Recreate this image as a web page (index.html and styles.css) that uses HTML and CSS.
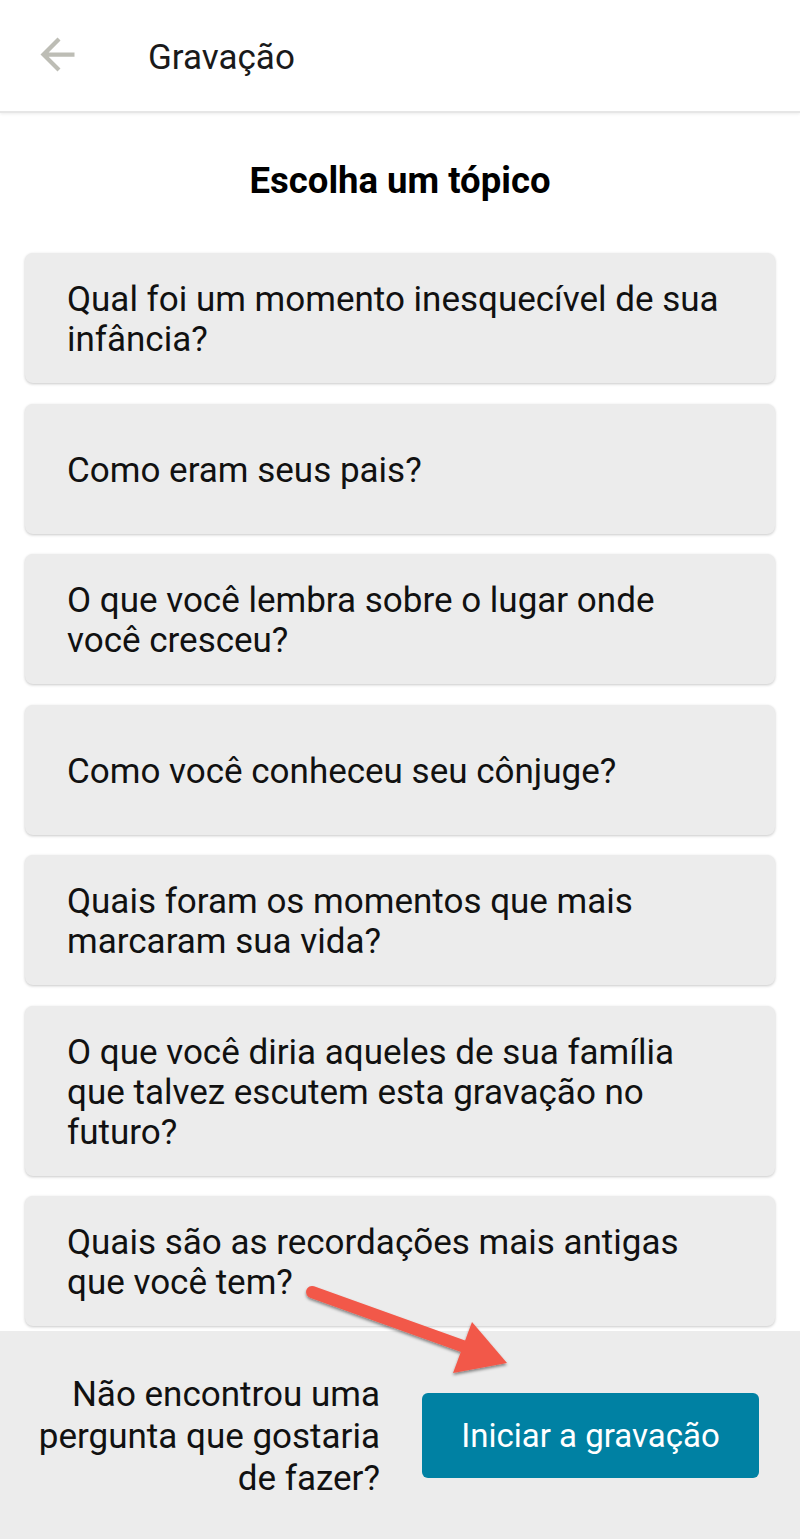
FILE: index.html
```html
<!DOCTYPE html>
<html lang="pt">
<head>
<meta charset="utf-8">
<title>Gravação</title>
<link rel="stylesheet" href="styles.css">
</head>
<body>
<div class="app">
  <header class="topbar">
    <svg class="back" viewBox="0 0 24 24" width="51" height="51"><path d="M20 11H7.83l5.59-5.59L12 4l-8 8 8 8 1.41-1.41L7.83 13H20v-2z"/></svg>
    <span class="topbar-title">Gravação</span>
  </header>
  <main class="content">
    <h1 class="heading">Escolha um tópico</h1>
    <div class="cards">
      <div class="card">Qual foi um momento inesquecível de sua infância?</div>
      <div class="card">Como eram seus pais?</div>
      <div class="card">O que você lembra sobre o lugar onde você cresceu?</div>
      <div class="card">Como você conheceu seu cônjuge?</div>
      <div class="card">Quais foram os momentos que mais marcaram sua vida?</div>
      <div class="card">O que você diria aqueles de sua família que talvez escutem esta gravação no futuro?</div>
      <div class="card">Quais são as recordações mais antigas que você tem?</div>
    </div>
  </main>
  <footer class="footer">
    <p class="footer-text">Não encontrou uma pergunta que gostaria de fazer?</p>
    <button class="start-btn">Iniciar a gravação</button>
  </footer>
  <svg class="pointer" viewBox="0 0 240 120" width="240" height="120">
    <defs>
      <filter id="sh" x="-20%" y="-20%" width="140%" height="160%">
        <feDropShadow dx="0" dy="2" stdDeviation="1.5" flood-color="#000" flood-opacity="0.45"/>
      </filter>
    </defs>
    <g filter="url(#sh)" fill="#f25849">
      <line x1="22" y1="22" x2="178" y2="78" stroke="#f25849" stroke-width="12" stroke-linecap="round"/>
      <polygon points="182,52 217,93 163,103"/>
    </g>
  </svg>
</div>
</body>
</html>
```

FILE: styles.css
```css
* { box-sizing: border-box; }
html, body { margin: 0; padding: 0; }
body {
  font-family: Roboto, "Liberation Sans", Arial, sans-serif;
  color: #111;
  background: #fff;
}
.app {
  position: relative;
  height: 1539px;
  display: flex;
  flex-direction: column;
  overflow: hidden;
}
.topbar {
  height: 113px;
  flex: none;
  display: flex;
  align-items: center;
  border-bottom: 2px solid #e6e6e6;
  box-shadow: 0 1px 3px rgba(0,0,0,0.08);
  position: relative;
  z-index: 2;
  background: #fff;
}
.back {
  fill: #bdbdb5;
  margin-left: 32px;
  margin-top: -2px;
}
.topbar-title {
  margin-left: 65px;
  font-size: 35px;
  color: #1a1a1a;
  margin-top: 3px;
}
.content {
  flex: 1;
  overflow: hidden;
  padding: 48px 25px 0;
}
.heading {
  margin: 0 0 52px;
  text-align: center;
  font-size: 36.5px;
  line-height: 40px;
  font-weight: 700;
  color: #000;
}
.cards {
  display: flex;
  flex-direction: column;
  gap: 20.5px;
}
.card {
  min-height: 130px;
  display: flex;
  align-items: center;
  padding: 27px 40px 23px 42px;
  background: #ececec;
  border-radius: 8px;
  box-shadow: 0 1px 3px rgba(0,0,0,0.22);
  font-size: 35px;
  line-height: 40px;
  color: #111;
}
.footer {
  flex: none;
  height: 208px;
  background: #ececec;
  display: flex;
  align-items: center;
  gap: 42px;
  padding: 0 41px 0 36px;
  position: relative;
  z-index: 2;
}
.footer-text {
  flex: none;
  width: 344px;
  margin: 4px 0 0;
  text-align: right;
  font-size: 35px;
  line-height: 42px;
  color: #111;
}
.start-btn {
  flex: 1;
  height: 85px;
  border: none;
  border-radius: 6px;
  background: #0081a3;
  color: #fff;
  font-family: inherit;
  font-size: 33px;
  padding: 0;
}
.pointer {
  position: absolute;
  left: 290px;
  top: 1270px;
  z-index: 3;
}
```
